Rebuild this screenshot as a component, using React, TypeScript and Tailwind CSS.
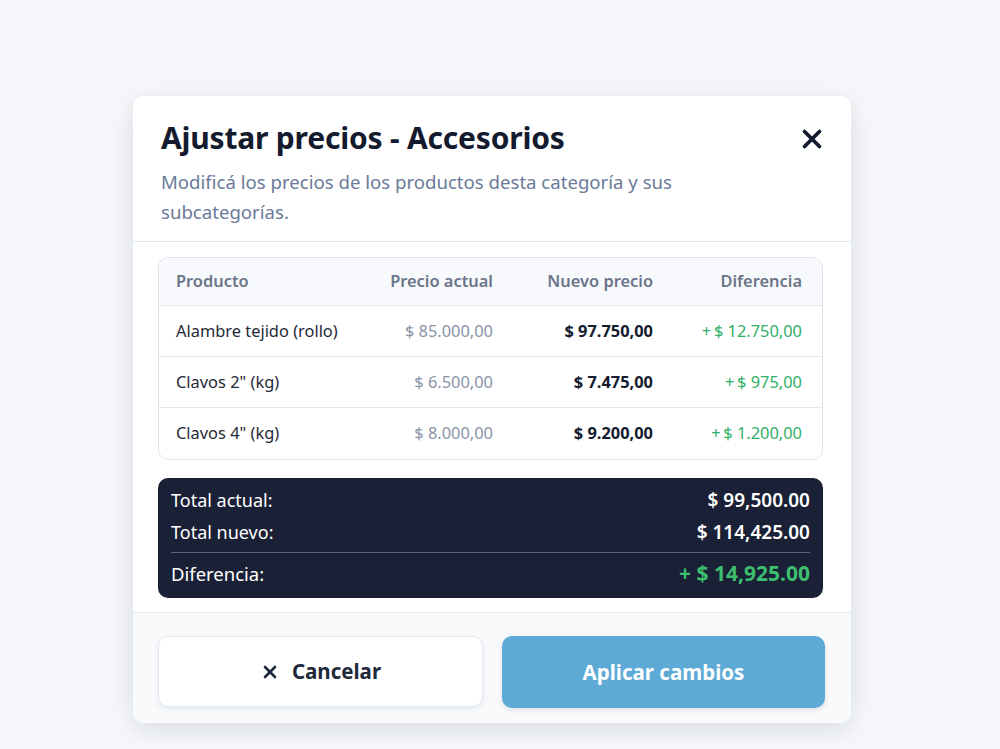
import { X } from 'lucide-react'

interface Row {
  name: string
  current: string
  next: string
  diff: string
}

const rows: Row[] = [
  { name: 'Alambre tejido (rollo)', current: '$ 85.000,00', next: '$ 97.750,00', diff: '+\u2009$ 12.750,00' },
  { name: 'Clavos 2" (kg)', current: '$ 6.500,00', next: '$ 7.475,00', diff: '+\u2009$ 975,00' },
  { name: 'Clavos 4" (kg)', current: '$ 8.000,00', next: '$ 9.200,00', diff: '+\u2009$ 1.200,00' },
]

const cols = 'grid grid-cols-[159px_158px_160px_1fr] items-center pl-[17px] pr-[20px]'

export default function App() {
  return (
    <div
      className="min-h-[749px] w-full bg-[#f5f7fa] flex justify-center pt-[96px] pr-[16px]"
      style={{ fontFamily: '"Noto Sans", "Open Sans", sans-serif' }}
    >
      <div className="w-[718px] h-[627px] bg-white rounded-[10px] shadow-[0_6px_24px_rgba(15,23,42,0.12)] flex flex-col overflow-hidden">
        {/* encabezado */}
        <div className="pl-[28px] pr-[28px] pt-[18px] pb-[14px] border-b border-[#e2e8f0]">
          <div className="flex items-start justify-between">
            <h2 className="text-[30px] font-bold text-[#141b2e] leading-[48px] tracking-[-0.2px]">
              Ajustar precios - Accesorios
            </h2>
            <button className="mt-[10px] mr-[-4px] text-[#141b2e]">
              <X size={30} strokeWidth={3} />
            </button>
          </div>
          <p className="mt-[5px] text-[18.6px] leading-[30px] text-[#6b7a99] w-[600px]">
            Modificá los precios de los productos desta categoría y sus subcategorías.
          </p>
        </div>

        {/* tabla y totales */}
        <div className="pl-[25px] pr-[28px] pt-[15px] pb-[14px] border-b border-[#e2e8f0]">
          <div className="border border-[#dfe4ec] rounded-[10px] overflow-hidden">
            <div className={`${cols} h-[48px] bg-[#f7f9fc] border-b border-[#e2e8f0] text-[16.4px] font-semibold text-[#6b7589]`}>
              <span>Producto</span>
              <span className="text-right">Precio actual</span>
              <span className="text-right">Nuevo precio</span>
              <span className="text-right">Diferencia</span>
            </div>
            {rows.map((r, i) => (
              <div
                key={r.name}
                className={`${cols} h-[51px] text-[16.4px] ${
                  i < rows.length - 1 ? 'border-b border-[#e2e8f0]' : ''
                }`}
              >
                <span className="text-[#1f2937] whitespace-nowrap">{r.name}</span>
                <span className="text-right text-[#8a94a8]">{r.current}</span>
                <span className="text-right font-bold text-[#141b2e]">{r.next}</span>
                <span className="text-right text-[#2fb067]">{r.diff}</span>
              </div>
            ))}
          </div>

          <div className="mt-[18px] bg-[#1a2035] rounded-[10px] px-[13px] pt-[6px] pb-[4px] text-white">
            <div className="flex justify-between items-center h-[32px] text-[18px]">
              <span>Total actual:</span>
              <span className="text-[19px] font-semibold">$ 99,500.00</span>
            </div>
            <div className="flex justify-between items-center h-[32px] text-[18px]">
              <span>Total nuevo:</span>
              <span className="text-[19px] font-semibold">$ 114,425.00</span>
            </div>
            <div className="border-t border-[#5b6478] mt-[4px]" />
            <div className="flex justify-between items-center h-[41px] text-[18.5px]">
              <span>Diferencia:</span>
              <span className="text-[21px] font-bold text-[#3cbf6e]">+ $ 14,925.00</span>
            </div>
          </div>
        </div>

        {/* acciones */}
        <div className="flex-1 bg-[#f8fafc] pl-[25px] pr-[26px] pt-[23px] flex gap-[19px]">
          <button className="flex-1 h-[71px] bg-white border border-[#e2e8f0] rounded-[10px] shadow-[0_2px_6px_rgba(15,23,42,0.08)] flex items-center justify-center gap-[12px] text-[20.5px] font-bold text-[#1e293b]">
            <X size={20} strokeWidth={3.2} />
            Cancelar
          </button>
          <button className="flex-1 h-[72px] bg-[#5eaad7] rounded-[10px] shadow-[0_2px_6px_rgba(15,23,42,0.1)] flex items-center justify-center text-[20.5px] font-bold text-white">
            Aplicar cambios
          </button>
        </div>
      </div>
    </div>
  )
}
